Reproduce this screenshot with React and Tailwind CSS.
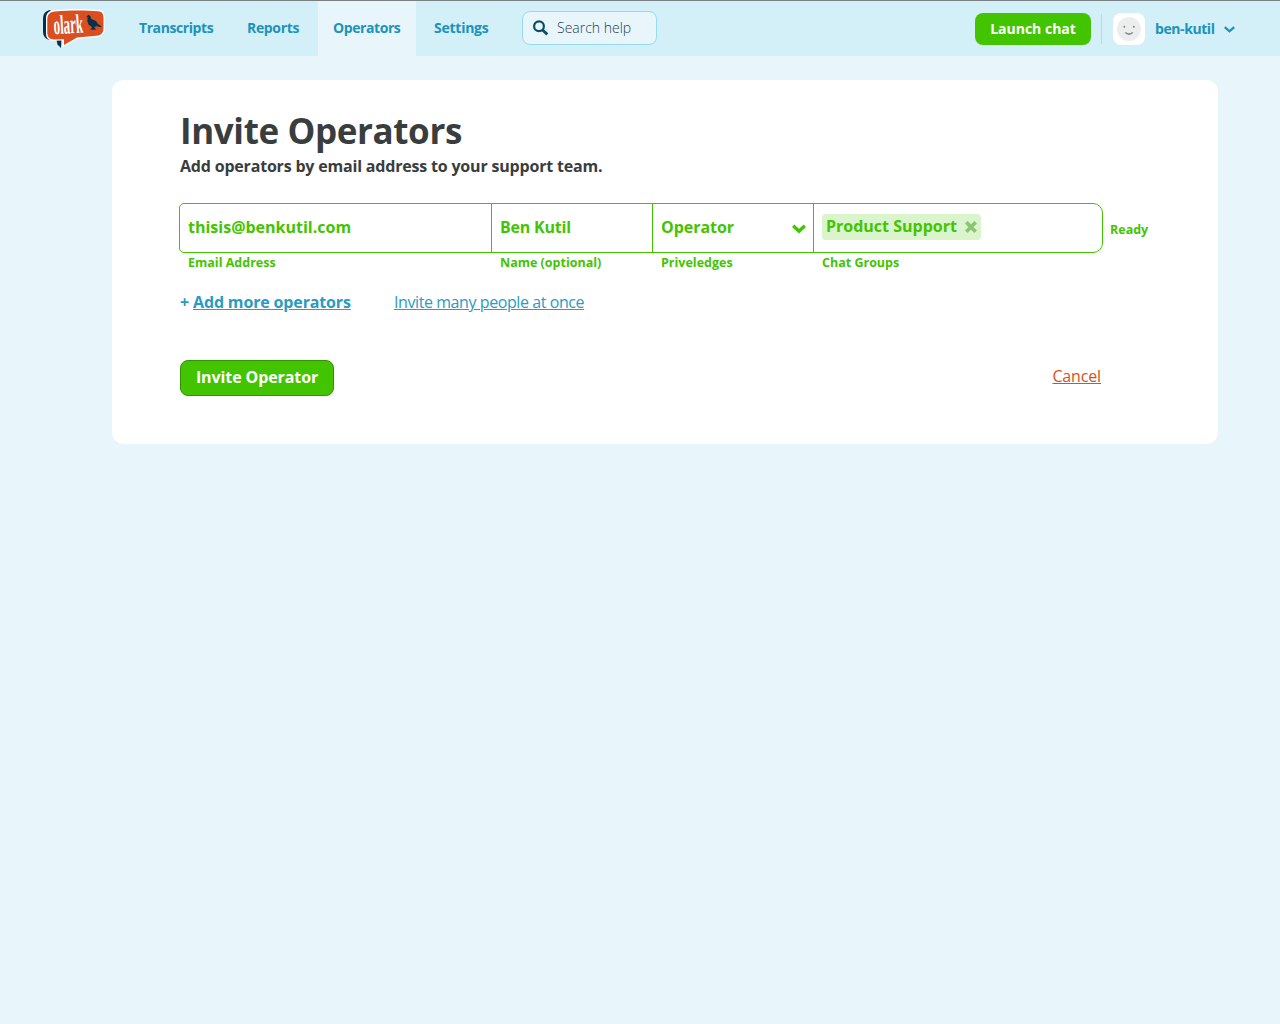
import React from "react";

function Logo() {
  return (
    <svg className="mt-[8px] block shrink-0 overflow-visible" width="64" height="41" viewBox="42 8 64 41">
      <path d="M50 10 C45 11 43 14 43 19 V31 C43 36 45 39 50 40 L52 36 L52 12Z" fill="#08304b" />
      <path d="M56.500 40 L61.500 39 L61 48 L57.500 44.500Z" fill="#08304b" />
      <path d="M54 10.300 C68 9 86 9 99 10.100 C103 10.500 104.500 13 104.700 17 V29 C104.500 34 102 36.300 97 36.900 L77.500 38.800 L62.500 47.300 L62.500 40.500 L53 40.700 C48.500 40.400 46.300 38 46 34 V19 C46 13.500 48.500 10.700 54 10.300Z" fill="#fff" />
      <path d="M55 11.500 C69 10.200 86 10.200 98 11.200 C102 11.600 103.300 13.500 103.500 17.500 V28.500 C103.300 33 101.300 35.200 96.500 35.700 L77 37.600 L64 45 L64 39.300 L54 39.500 C49.500 39.300 47.500 37 47.300 33 V20 C47.300 14.500 49.500 12 55 11.500Z" fill="#d94f20" />
      <text transform="translate(54 34.200) rotate(-3) scale(0.480 1)" fill="#fff" fontFamily="Liberation Serif, serif" fontWeight="700" fontSize="27">olark</text>
      <path d="M86.500 16.500 L88.500 14.800 L90.300 16 L91.300 19 L96 21 L98 24 L101.500 26.300 L101 27.300 L97 26.300 L94 27 L95.800 29 L96.800 29.600 L92 29.800 L89.500 29.300 L91.500 28.800 L91.800 27 L88.500 24.500 L87.300 21 L87.700 17.800Z" fill="#08304b" />
    </svg>
  );
}

function Field({ className, label, children }) {
  return (
    <div className={className}>
      <div className="flex h-[46px] items-center pl-2">{children}</div>
      <div className="mt-1 h-5 whitespace-nowrap pl-2 text-[12.5px] leading-[18px]">{label}</div>
    </div>
  );
}

export default function App() {
  return (
    <div className="min-h-[1024px] w-[1280px] bg-[#e8f6fc] font-['Open_Sans',sans-serif] text-[#393d3e]">
      <header className="flex h-14 border-t border-[#777f83] bg-[#d3eff8] pl-[42px] text-[14px] font-bold text-[#1b93bb]">
        <div className="-mt-px flex w-[82px]"><Logo /></div>
        <nav className="flex h-[55px] whitespace-nowrap leading-[54px]">
          <a className="w-[108px] pl-[15px] tracking-[-0.42px]">Transcripts</a>
          <a className="w-[86px] pl-[15px] tracking-[-0.35px]">Reports</a>
          <a className="w-[98px] bg-[#e8f6fc] pl-[15px] tracking-[-0.42px]">Operators</a>
          <a className="w-[106px] pl-[18px] tracking-[-0.25px]">Settings</a>
        </nav>
        <div className="mt-[10px] flex h-[34px] w-[135px] items-center rounded-[8px] border border-[#95daf1] bg-[#e8f6fc] pl-[10px] font-light text-[#25414e]">
          <svg width="16" height="16" viewBox="0 0 16 16" fill="none" stroke="#0c4d66" strokeWidth="2.200">
            <circle cx="6" cy="6.300" r="4.900" />
            <path d="M9.500 10 L14.300 14.400" strokeWidth="2.800" />
          </svg>
          <span className="-mt-px ml-[8px] whitespace-nowrap">Search help</span>
        </div>
        <button className="ml-auto mt-[12px] h-8 w-[116px] whitespace-nowrap rounded-[8px] bg-[#43c400] pb-[2px] text-[14px] font-bold text-white">Launch chat</button>
        <div className="ml-[10px] mt-[13px] h-[30px] w-px bg-[#aadfee]" />
        <div className="ml-[11px] mt-[12px] flex h-8 w-8 items-center justify-center rounded-[8px] bg-white">
          <svg width="24" height="24" viewBox="0 0 24 24">
            <circle cx="12" cy="12" r="12" fill="#eceeee" />
            <circle cx="7.300" cy="9.800" r="1" fill="#80878b" />
            <circle cx="16.800" cy="9.800" r="1" fill="#80878b" />
            <path d="M8.300 15.500 Q12 18.700 15.800 15.500" fill="none" stroke="#80878b" strokeWidth="1.600" />
          </svg>
        </div>
        <span className="ml-[10px] mt-[17px] w-[60px] whitespace-nowrap leading-[22px] tracking-[-0.42px]">ben-kutil</span>
        <svg className="ml-[9px] mr-[45px] mt-[25px]" width="11" height="8" viewBox="0 0 11 8" fill="none" stroke="#1b93bb" strokeWidth="2.300">
          <path d="M0.800 1.200 L5.500 5.300 L10.200 1.200" />
        </svg>
      </header>

      <main className="ml-[112px] mt-6 h-[364px] w-[1106px] rounded-[12px] bg-white pl-[67px] pt-[28px]">
        <h1 className="ml-px h-[46px] whitespace-nowrap text-[35px] font-bold leading-[46px] tracking-[-0.38px]">Invite Operators</h1>
        <p className="ml-px h-[24px] whitespace-nowrap text-[16px] font-bold leading-[24px] tracking-[-0.19px]">Add operators by email address to your support team.</p>

        <div className="mt-[25px] flex font-bold text-[#43c400]">
          <div className="h-[50px] w-[924px] rounded-l-[5px] rounded-r-[10px] border border-[#43c400] text-[16px]">
            <div className="flex">
              <Field className="w-[311px]" label="Email Address"><span>thisis@benkutil.com</span></Field>
              <div className="h-[48px] w-px bg-[#43c400]" />
              <Field className="w-[160px]" label="Name (optional)"><span className="tracking-[-0.2px]">Ben Kutil</span></Field>
              <div className="h-[48px] w-px bg-[#43c400]" />
              <Field className="w-[160px]" label="Priveledges">
                <span className="tracking-[-0.05px]">Operator</span>
                <svg className="ml-auto mr-[7px] mt-[4px]" width="14" height="10" viewBox="0 0 14 10" fill="none" stroke="#43c400" strokeWidth="3.400"><path d="M1.200 1.800 L7 7.200 L12.800 1.800" /></svg>
              </Field>
              <div className="h-[48px] w-px bg-[#43c400]" />
              <Field className="w-[288px]" label="Chat Groups">
                <span className="flex h-[26px] w-[159px] items-center rounded-[4px] bg-[#daf4cc] pl-1">
                  <span className="-mt-[2px] whitespace-nowrap leading-[24px]">Product Support</span>
                  <svg className="ml-auto mr-[4px]" width="12" height="12" viewBox="0 0 12 12" stroke="#8ac574" strokeWidth="3.600"><path d="M1.300 1.300 L10.700 10.700 M10.700 1.300 L1.300 10.700" /></svg>
                </span>
              </Field>
            </div>
          </div>
          <span className="ml-[7px] mt-[18px] text-[12.5px] leading-[18px]">Ready</span>
        </div>

        <div className="ml-px mt-[37px] flex h-6 whitespace-nowrap text-[16px] leading-6 text-[#2a9bc1]">
          <span className="w-[214px] font-bold tracking-[-0.15px]">+ <a className="underline underline-offset-1">Add more operators</a></span>
          <a className="tracking-[-0.42px] underline underline-offset-1">Invite many people at once</a>
        </div>

        <div className="ml-px mt-[46px] flex h-9 w-[921px] justify-between">
          <button className="h-9 w-[154px] whitespace-nowrap rounded-[8px] border border-[#2f9400] bg-[#43c400] pb-[2px] text-[16px] font-bold leading-[32px] tracking-[-0.1px] text-white">Invite Operator</button>
          <a className="mt-[4px] text-[16px] leading-6 tracking-[-0.15px] text-[#d94f20] underline underline-offset-1">Cancel</a>
        </div>
      </main>
    </div>
  );
}
